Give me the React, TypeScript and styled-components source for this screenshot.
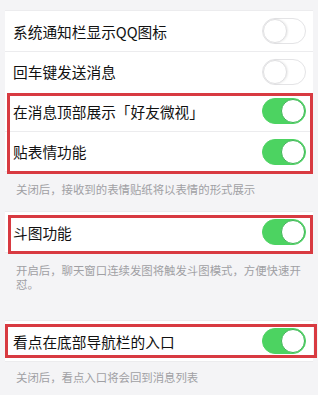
import React from "react";
import styled, { createGlobalStyle } from "styled-components";

const Global = createGlobalStyle`
  html, body { margin: 0; padding: 0; background: #f4f4f6; }
  body { font-family: "Noto Sans CJK SC", "Noto Sans", sans-serif; }
`;

const Page = styled.div`
  width: 318px;
  height: 395px;
  overflow: hidden;
  background: #f4f4f6;
  padding: 10px 5px 0 5px;
  box-sizing: border-box;
  display: flex;
  flex-direction: column;
`;

const Group = styled.div`
  background: #fff;
  display: flex;
  flex-direction: column;
  border-top: 1px solid #ececee;
  border-bottom: 1px solid #ececee;
`;

const Row = styled.div`
  height: 40px;
  display: flex;
  align-items: center;
  justify-content: space-between;
  padding: 0 7px 0 8px;
  box-sizing: border-box;
  & + & { border-top: 1px solid #ececee; }
`;

const Title = styled.span`
  font-size: 14.7px;
  color: #111;
  letter-spacing: 0;
`;

const Track = styled.div<{ $on: boolean }>`
  width: 44px;
  height: 26px;
  border-radius: 13px;
  box-sizing: border-box;
  background: ${(p) => (p.$on ? "#4cd361" : "#fff")};
  border: 1px solid ${(p) => (p.$on ? "#4cd361" : "#e4e4e6")};
  display: flex;
  align-items: center;
  justify-content: ${(p) => (p.$on ? "flex-end" : "flex-start")};
  padding: 0;
`;

const Knob = styled.div<{ $on: boolean }>`
  width: 24px;
  height: 24px;
  border-radius: 50%;
  background: #fff;
  box-sizing: border-box;
  border: 1px solid ${(p) => (p.$on ? "#3fb556" : "#e0e0e2")};
  box-shadow: ${(p) => (p.$on ? "none" : "1px 0 2px rgba(0,0,0,0.08)")};
`;

const Caption = styled.div<{ $top: number; $bottom: number }>`
  font-size: 11.4px;
  line-height: 14px;
  color: #a0a0a4;
  padding: ${(p) => p.$top}px 12px ${(p) => p.$bottom}px 11px;
`;

const Highlight = styled.div<{ $t: number; $l: number; $r: number; $b: number }>`
  position: relative;
  &::after {
    content: "";
    position: absolute;
    top: ${(p) => p.$t}px;
    left: ${(p) => p.$l}px;
    right: ${(p) => p.$r}px;
    bottom: ${(p) => p.$b}px;
    border: 3px solid #d83a41;
    pointer-events: none;
  }
`;

const Toggle = ({ on }: { on: boolean }) => (
  <Track $on={on}>
    <Knob $on={on} />
  </Track>
);

const Item = ({ title, on }: { title: string; on: boolean }) => (
  <Row>
    <Title>{title}</Title>
    <Toggle on={on} />
  </Row>
);

export default function App() {
  return (
    <>
      <Global />
      <Page>
        <Group>
          <Item title="系统通知栏显示QQ图标" on={false} />
          <Item title="回车键发送消息" on={false} />
          <Highlight $t={2} $l={2} $r={0} $b={-3}>
            <Item title="在消息顶部展示「好友微视」" on />
            <Item title="贴表情功能" on />
          </Highlight>
        </Group>
        <Caption $top={10} $bottom={15}>关闭后，接收到的表情贴纸将以表情的形式展示</Caption>
        <Group>
          <Highlight $t={3} $l={3} $r={0} $b={-2}>
            <Item title="斗图功能" on />
          </Highlight>
        </Group>
        <Caption $top={10} $bottom={29}>开启后，聊天窗口连续发图将触发斗图模式，方便快速开怼。</Caption>
        <Group>
          <Highlight $t={3} $l={0} $r={-4} $b={3}>
            <Item title="看点在底部导航栏的入口" on />
          </Highlight>
        </Group>
        <Caption $top={8} $bottom={10}>关闭后，看点入口将会回到消息列表</Caption>
      </Page>
    </>
  );
}
